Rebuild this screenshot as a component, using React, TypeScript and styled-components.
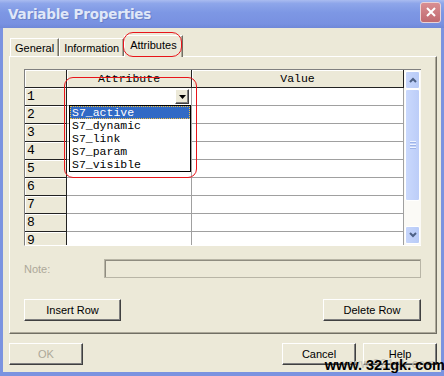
import {FC, Fragment} from "react";
import styled, {createGlobalStyle} from "styled-components";

const GlobalStyle = createGlobalStyle`
  html, body {
    margin: 0;
    padding: 0;
    background: #ece9d8;
  }
`

const StyledWindow = styled.div`
  position: relative;
  width: 444px;
  height: 376px;
  display: flex;
  flex-direction: column;
  overflow: hidden;
  background: #ece9d8;
  font-family: "Liberation Sans", Arial, sans-serif;
  font-size: 11px;
  color: #000;
`
const StyledTitleBar = styled.div`
  height: 28px;
  flex: none;
  display: flex;
  align-items: center;
  justify-content: space-between;
  padding: 0 3px 0 8px;
  box-sizing: border-box;
  background: linear-gradient(to bottom, #aabcf0 0%, #8ea6ea 12%, #7d97e4 45%, #7891e1 85%, #6f88d8 100%);
`
const StyledTitle = styled.div`
  font-family: "DejaVu Sans", "Liberation Sans", sans-serif;
  font-weight: bold;
  font-size: 13.5px;
  color: #dfe7f8;
  text-shadow: 1px 1px 0 #6a80c8;
  letter-spacing: -0.2px;
`
const StyledClose = styled.div`
  width: 21px;
  height: 21px;
  margin-top: -4px;
  border: 1px solid #e9d3d6;
  border-radius: 3px;
  box-sizing: border-box;
  background: linear-gradient(to bottom, #d98e92, #c06a70);
  display: flex;
  align-items: center;
  justify-content: center;
`
const StyledBody = styled.div`
  flex: 1;
  display: flex;
  flex-direction: column;
  border-left: 3px solid #7b93e0;
  border-right: 3px solid #7b93e0;
  border-bottom: 4px solid #7b93e0;
  padding: 7px 4px 0 6px;
`
const StyledTabStrip = styled.div`
  height: 21px;
  display: flex;
  align-items: flex-end;
  padding-left: 1px;
  position: relative;
  z-index: 1;
`
const StyledTab = styled.div<{ $active?: boolean }>`
  height: ${p => p.$active ? 22 : 18}px;
  margin-bottom: ${p => p.$active ? -1 : 0}px;
  padding: ${p => p.$active ? "0 5px 3px" : "0 4px"};
  display: flex;
  align-items: center;
  box-sizing: border-box;
  background: #ece9d8;
  border-top: 1px solid #fff;
  border-left: 1px solid #fff;
  border-right: 1px solid #716f64;
  box-shadow: inset -1px 0 #aca899;
  font-size: 11px;
`
const StyledPanel = styled.div`
  height: 278px;
  box-sizing: border-box;
  border-top: 1px solid #fff;
  border-left: 1px solid #fff;
  border-right: 1px solid #716f64;
  border-bottom: 1px solid #716f64;
  box-shadow: inset -1px -1px #aca899;
  padding: 12px 15px 0 14px;
  display: flex;
  flex-direction: column;
`
const StyledGridBox = styled.div`
  height: 177px;
  display: flex;
  box-sizing: border-box;
  border-top: 1px solid #808080;
  border-left: 1px solid #808080;
  border-bottom: 1px solid #fff;
  background: #fff;
`
const StyledGrid = styled.div`
  flex: 1;
  display: grid;
  grid-template-columns: 42px 125px 1fr;
  grid-auto-rows: 18px;
  overflow: hidden;
  font-family: "Liberation Mono", "Courier New", monospace;
  font-size: 11.5px;
`
const StyledHeadCell = styled.div<{ $num?: boolean }>`
  background: #ece9d8;
  box-sizing: border-box;
  border-right: 1px solid #222;
  border-bottom: 1px solid #222;
  box-shadow: inset 1px 1px #fff;
  display: flex;
  align-items: ${p => p.$num ? "flex-start" : "center"};
  justify-content: ${p => p.$num ? "flex-start" : "center"};
  padding: ${p => p.$num ? "1px 0 0 2px" : "0"};
  font-size: ${p => p.$num ? 13 : 11.5}px;
  line-height: 15px;
`
const StyledCell = styled.div`
  position: relative;
  box-sizing: border-box;
  border-right: 1px solid #a0a0a0;
  border-bottom: 1px solid #a0a0a0;
  background: #fff;
`
const StyledComboArrow = styled.div`
  position: absolute;
  right: 2px;
  top: 1px;
  width: 14px;
  height: 15px;
  box-sizing: border-box;
  background: #ece9d8;
  border: 1px solid;
  border-color: #fff #404040 #404040 #fff;
  box-shadow: inset -1px -1px #808080;
  display: flex;
  align-items: center;
  justify-content: center;
`
const StyledDropList = styled.div`
  position: absolute;
  left: 2px;
  right: 0;
  top: 100%;
  z-index: 3;
  background: #fff;
  border: 1px solid #000;
  display: flex;
  flex-direction: column;
`
const StyledDropItem = styled.div<{ $selected?: boolean }>`
  height: 13px;
  line-height: 13px;
  padding-left: 2px;
  font-family: "Liberation Mono", "Courier New", monospace;
  font-size: 11.5px;
  background: ${p => p.$selected ? "#316ac5" : "#fff"};
  color: ${p => p.$selected ? "#fff" : "#000"};
  outline: ${p => p.$selected ? "1px dotted #f0c040" : "none"};
  outline-offset: -1px;
`
const StyledScrollbar = styled.div`
  width: 17px;
  display: flex;
  flex-direction: column;
  background: #fbfaf6;
  padding: 1px 0;
  box-sizing: border-box;
`
const StyledScrollBtn = styled.div`
  height: 16px;
  margin: 0 1px;
  border: 1px solid #fff;
  border-radius: 2px;
  background: linear-gradient(to right, #c6d5fb, #b8cbf7);
  display: flex;
  align-items: center;
  justify-content: center;
`
const StyledThumb = styled.div`
  height: 110px;
  margin: 0 1px;
  border: 1px solid #fff;
  border-radius: 2px;
  background: linear-gradient(to right, #cad9fd, #bccdf8);
  display: flex;
  flex-direction: column;
  align-items: center;
  justify-content: center;
  gap: 1px;
`
const StyledGrip = styled.div`
  width: 6px;
  height: 1px;
  background: #eef3fe;
  border-bottom: 1px solid #9db3e8;
`
const StyledTrack = styled.div`
  flex: 1;
`
const StyledNoteRow = styled.div`
  display: flex;
  align-items: center;
  margin-top: 13px;
  height: 19px;
`
const StyledNoteLabel = styled.div`
  width: 80px;
  color: #aca899;
  font-size: 11px;
`
const StyledNoteInput = styled.div`
  flex: 1;
  height: 19px;
  box-sizing: border-box;
  border: 1px solid #b8b5a6;
  box-shadow: inset 1px 1px #8f8c80;
  background: #ece9d8;
`
const StyledButtonRow = styled.div`
  display: flex;
  justify-content: space-between;
  margin-top: 21px;
`
const StyledButton = styled.div<{ $w: number; $disabled?: boolean }>`
  width: ${p => p.$w}px;
  height: 22px;
  box-sizing: border-box;
  background: #ece9d8;
  border: 1px solid;
  border-color: #fff #404040 #404040 #fff;
  box-shadow: inset -1px -1px #808080;
  display: flex;
  align-items: center;
  justify-content: center;
  font-size: 11px;
  color: ${p => p.$disabled ? "#aca899" : "#000"};
`
const StyledFooter = styled.div`
  display: flex;
  gap: 7px;
  margin-top: 9px;
`
const StyledSpacer = styled.div`
  flex: 1;
`
const StyledMark = styled.div<{ $x: number; $y: number; $w: number; $h: number; $r: number }>`
  position: absolute;
  left: ${p => p.$x}px;
  top: ${p => p.$y}px;
  width: ${p => p.$w}px;
  height: ${p => p.$h}px;
  border: 1.5px solid #e8141a;
  border-radius: ${p => p.$r}px;
  box-sizing: border-box;
  z-index: 5;
  pointer-events: none;
`
const StyledGhost = styled.div`
  position: absolute;
  right: 8px;
  bottom: 5px;
  font-size: 12px;
  color: #c4c1b6;
  letter-spacing: 0.5px;
  z-index: 6;
`
const StyledWatermark = styled.div`
  position: absolute;
  right: -1px;
  bottom: 4px;
  font-family: "Liberation Sans", Arial, sans-serif;
  font-weight: bold;
  font-size: 14.5px;
  line-height: 14px;
  color: #000;
  z-index: 7;
  white-space: pre;
`

const DownArrow: FC = () => (
    <svg width="7" height="4" viewBox="0 0 7 4">
        <path d="M0 0h7L3.5 4z" fill="#000"/>
    </svg>
)

const Chevron: FC<{ up?: boolean }> = ({up}) => (
    <svg width="8" height="6" viewBox="0 0 8 6">
        <path d={up ? "M1 5L4 2L7 5" : "M1 1L4 4L7 1"} stroke="#4d6185" strokeWidth="2" fill="none"/>
    </svg>
)

const items = ["S7_active", "S7_dynamic", "S7_link", "S7_param", "S7_visible"];
const rows = [1, 2, 3, 4, 5, 6, 7, 8, 9];

export default function App() {
    return (
        <>
            <GlobalStyle/>
            <StyledWindow>
                <StyledTitleBar>
                    <StyledTitle>Variable Properties</StyledTitle>
                    <StyledClose>
                        <svg width="10" height="10" viewBox="0 0 10 10">
                            <path d="M1 1L9 9M9 1L1 9" stroke="#fff" strokeWidth="2"/>
                        </svg>
                    </StyledClose>
                </StyledTitleBar>
                <StyledBody>
                    <StyledTabStrip>
                        <StyledTab>General</StyledTab>
                        <StyledTab>Information</StyledTab>
                        <StyledTab $active>Attributes</StyledTab>
                    </StyledTabStrip>
                    <StyledPanel>
                        <StyledGridBox>
                            <StyledGrid>
                                <StyledHeadCell $num/>
                                <StyledHeadCell>Attribute</StyledHeadCell>
                                <StyledHeadCell>Value</StyledHeadCell>
                                {rows.map(n => (
                                    <Fragment key={n}>
                                        <StyledHeadCell $num>{n}</StyledHeadCell>
                                        <StyledCell>
                                            {n === 1 ? (
                                                <>
                                                    <StyledComboArrow><DownArrow/></StyledComboArrow>
                                                    <StyledDropList>
                                                        {items.map((it, i) => (
                                                            <StyledDropItem key={it} $selected={i === 0}>{it}</StyledDropItem>
                                                        ))}
                                                    </StyledDropList>
                                                </>
                                            ) : null}
                                        </StyledCell>
                                        <StyledCell/>
                                    </Fragment>
                                ))}
                            </StyledGrid>
                            <StyledScrollbar>
                                <StyledScrollBtn><Chevron up/></StyledScrollBtn>
                                <StyledThumb>
                                    <StyledGrip/><StyledGrip/><StyledGrip/>
                                </StyledThumb>
                                <StyledTrack/>
                                <StyledScrollBtn><Chevron/></StyledScrollBtn>
                            </StyledScrollbar>
                        </StyledGridBox>
                        <StyledNoteRow>
                            <StyledNoteLabel>Note:</StyledNoteLabel>
                            <StyledNoteInput/>
                        </StyledNoteRow>
                        <StyledButtonRow>
                            <StyledButton $w={97}>Insert Row</StyledButton>
                            <StyledButton $w={98}>Delete Row</StyledButton>
                        </StyledButtonRow>
                    </StyledPanel>
                    <StyledFooter>
                        <StyledButton $w={74} $disabled>OK</StyledButton>
                        <StyledSpacer/>
                        <StyledButton $w={74}>Cancel</StyledButton>
                        <StyledButton $w={74}>Help</StyledButton>
                    </StyledFooter>
                </StyledBody>
                <StyledMark $x={123} $y={32} $w={59} $h={25} $r={10}/>
                <StyledMark $x={64} $y={77} $w={133} $h={101} $r={9}/>
                <StyledGhost>www.321gk.com</StyledGhost>
                <StyledWatermark>www. 321gk. com</StyledWatermark>
            </StyledWindow>
        </>
    )
}
